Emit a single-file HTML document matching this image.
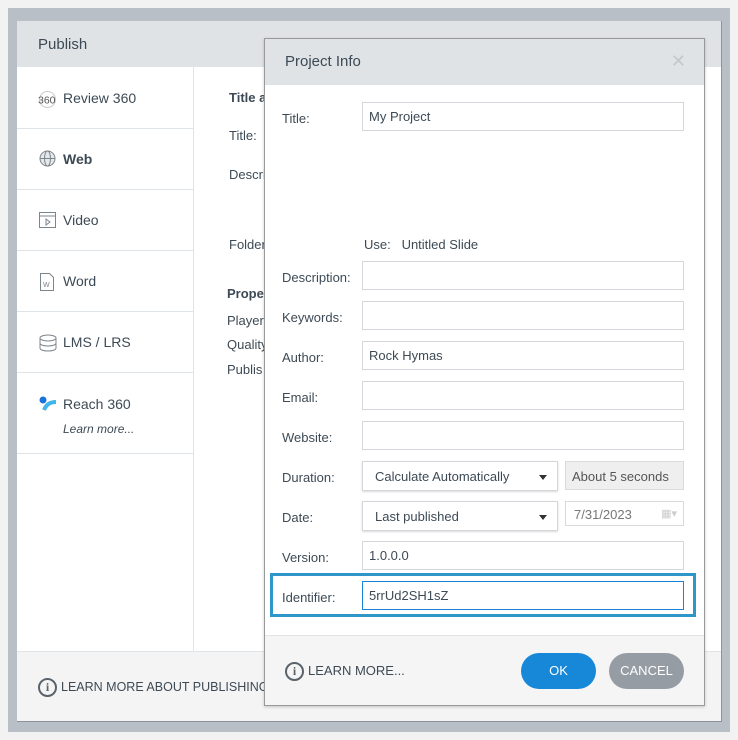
<!DOCTYPE html>
<html><head><style>
*{margin:0;padding:0;box-sizing:border-box}
body{width:738px;height:740px;background:#f2f2f2;position:relative;font-family:"Liberation Sans",sans-serif;color:#3d4a55;font-size:13px;overflow:hidden}
.abs{position:absolute}
.frame{left:8px;top:8px;width:722px;height:724px;background:#b8bfc6}
.dlg{left:17px;top:21px;width:705px;height:701px;background:#fff;border-right:1px solid #8d9399;border-bottom:1px solid #8d9399}
.hdr{left:0;top:0;width:704px;height:46px;background:#dfe3e6;font-size:15px;padding:15px 21px}
.nav{left:0;top:46px;width:177px;height:584px;border-right:1px solid #dfe4e8}
.ni{position:absolute;left:0;width:177px;border-bottom:1px solid #dfe4e8;font-size:14px}
.ni span{position:absolute;left:46px}
.foot{left:0;top:630px;width:704px;height:70px;background:#f4f4f4;border-top:1px solid #dfe4e8}
.pi{left:264px;top:38px;width:441px;height:668px;background:#fff;border:1px solid #999;box-shadow:0 1px 3px rgba(0,0,0,.2)}
.pih{left:0;top:0;width:439px;height:46px;background:#dfe3e6;font-size:15px;padding:14px 20px}
.lbl{position:absolute;left:17px;font-size:13px;margin-top:-1px}
.inp{position:absolute;left:97px;width:322px;height:29px;border:1px solid #d3d7db;background:#fff;padding:6px 6px;font-size:13px}
.sel{position:absolute;left:97px;width:196px;height:30px;border:1px solid #d3d7db;box-shadow:0 1px 2px rgba(0,0,0,.15);padding:7px 12px;font-size:13px}
.sel:after{content:"";position:absolute;right:10px;top:13px;border:4px solid transparent;border-top:5px solid #333}
.pf{left:0;top:596px;width:439px;height:70px;background:#f5f5f5;border-top:1px solid #e2e5e8}
.btn{position:absolute;top:17px;width:75px;height:36px;border-radius:18px;color:#fff;font-size:13px;text-align:center;line-height:36px}
.info{display:inline-block;width:19px;height:19px;border:2px solid #5a636b;border-radius:50%;text-align:center;font:bold 12px/15px "Liberation Serif",serif;color:#5a636b;vertical-align:middle;margin-right:4px}
</style></head><body>
<div class="abs frame"></div>
<div class="abs dlg">
 <div class="abs hdr">Publish</div>
 <div class="abs nav">
  <div class="ni" style="top:0;height:62px"><svg class="abs" style="left:21px;top:24px" width="19" height="17"><circle cx="9.5" cy="8.5" r="8" fill="none" stroke="#ccc"/><text x="0" y="12.5" font-size="10.5" fill="#555" font-family="Liberation Sans">360</text></svg><span style="top:23px">Review 360</span></div>
  <div class="ni" style="top:62px;height:61px"><svg class="abs" style="left:22px;top:21px" width="17" height="17"><circle cx="8.5" cy="8.5" r="7.5" fill="#e5e8eb" stroke="#7c848c"/><ellipse cx="8.5" cy="8.5" rx="3" ry="7.5" fill="none" stroke="#7c848c"/><line x1="1" y1="8.5" x2="16" y2="8.5" stroke="#7c848c"/></svg><span style="top:22px;font-weight:bold">Web</span></div>
  <div class="ni" style="top:123px;height:61px"><svg class="abs" style="left:22px;top:22px" width="17" height="16"><rect x=".5" y=".5" width="16" height="15" fill="none" stroke="#7c848c"/><line x1="1" y1="4" x2="16" y2="4" stroke="#7c848c"/><path d="M7 7l4 3-4 3z" fill="none" stroke="#7c848c"/></svg><span style="top:22px">Video</span></div>
  <div class="ni" style="top:184px;height:61px"><svg class="abs" style="left:23px;top:22px" width="14" height="18"><path d="M.5 .5h9l4 4v13H.5z" fill="none" stroke="#7c848c"/><text x="3" y="14" font-size="7" fill="#7c848c">W</text></svg><span style="top:22px">Word</span></div>
  <div class="ni" style="top:245px;height:61px"><svg class="abs" style="left:22px;top:22px" width="18" height="18"><ellipse cx="9" cy="4" rx="8" ry="3" fill="none" stroke="#7c848c"/><path d="M1 4v10c0 4 16 4 16 0V4M1 9c0 4 16 4 16 0" fill="none" stroke="#7c848c"/></svg><span style="top:22px">LMS / LRS</span></div>
  <div class="ni" style="top:306px;height:81px"><svg class="abs" style="left:22px;top:23px" width="18" height="16"><circle cx="4" cy="4" r="3.5" fill="#1a73d9"/><path d="M5 14 Q8 6 17 6" fill="none" stroke="#41b6ee" stroke-width="4"/></svg><span style="top:23px">Reach 360</span><span style="top:49px;font-size:12px;font-style:italic">Learn more...</span></div>
 </div>
 <div class="abs" style="left:212px;top:69px;font-weight:bold;font-size:13px">Title a</div>
 <div class="abs" style="left:212px;top:107px">Title:</div>
 <div class="abs" style="left:212px;top:146px">Descri</div>
 <div class="abs" style="left:212px;top:216px">Folder</div>
 <div class="abs" style="left:210px;top:265px;font-weight:bold">Prope</div>
 <div class="abs" style="left:210px;top:292px">Player</div>
 <div class="abs" style="left:210px;top:316px">Quality</div>
 <div class="abs" style="left:210px;top:341px">Publis</div>
 <div class="abs foot"><div style="position:absolute;left:21px;top:26px;font-size:12.5px"><span class="info">i</span>LEARN MORE ABOUT PUBLISHING</div></div>
</div>
<div class="abs pi">
 <div class="abs pih">Project Info<span style="position:absolute;right:18px;top:12px;color:#c4c8cc;font-size:18px">✕</span></div>
 <div class="lbl" style="top:73px">Title:</div><div class="inp" style="top:63px">My Project</div>
 <div class="abs" style="left:99px;top:198px">Use:&nbsp;&nbsp; Untitled Slide</div>
 <div class="lbl" style="top:232px">Description:</div><div class="inp" style="top:222px"></div>
 <div class="lbl" style="top:272px">Keywords:</div><div class="inp" style="top:262px"></div>
 <div class="lbl" style="top:312px">Author:</div><div class="inp" style="top:302px">Rock Hymas</div>
 <div class="lbl" style="top:352px">Email:</div><div class="inp" style="top:342px"></div>
 <div class="lbl" style="top:392px">Website:</div><div class="inp" style="top:382px"></div>
 <div class="lbl" style="top:432px">Duration:</div><div class="sel" style="top:422px">Calculate Automatically</div>
 <div class="abs" style="left:300px;top:422px;width:119px;height:29px;background:#efefef;border:1px solid #d8dbde;padding:7px 6px;font-size:13px;color:#555">About 5 seconds</div>
 <div class="lbl" style="top:472px">Date:</div><div class="sel" style="top:462px">Last published</div>
 <div class="abs" style="left:300px;top:462px;width:119px;height:25px;border:1px solid #d8dbde;padding:5px 8px;font-size:13px;color:#777">7/31/2023<span style="position:absolute;right:6px;top:5px;color:#ccc;font-size:11px">▦▾</span></div>
 <div class="lbl" style="top:512px">Version:</div><div class="inp" style="top:502px">1.0.0.0</div>
 <div class="abs" style="left:5px;top:534px;width:426px;height:44px;border:3px solid #2f96c9"></div>
 <div class="lbl" style="top:552px">Identifier:</div><div class="inp" style="top:542px;border-color:#1b82d6">5rrUd2SH1sZ</div>
 <div class="abs pf">
  <div style="position:absolute;left:20px;top:26px;font-size:13px"><span class="info">i</span>LEARN MORE...</div>
  <div class="btn" style="left:256px;background:#1787d8">OK</div>
  <div class="btn" style="left:344px;background:#959ca3">CANCEL</div>
 </div>
</div>
</body></html>
